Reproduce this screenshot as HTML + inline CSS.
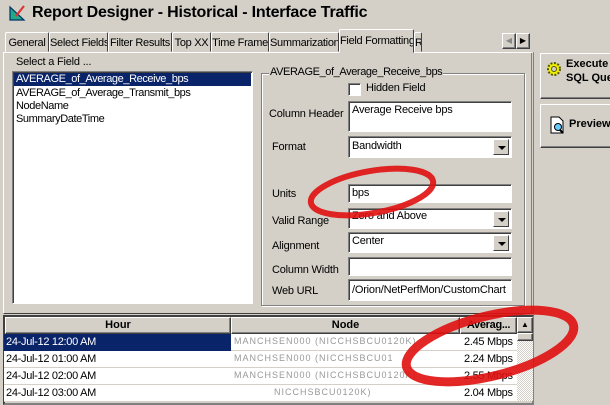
<!DOCTYPE html>
<html><head><meta charset="utf-8"><style>
*{box-sizing:border-box}
body{margin:0;width:610px;height:400px;overflow:hidden;background:#d4d0c8;font-family:"Liberation Sans",sans-serif;font-size:11px;color:#000;position:relative}
.a{position:absolute}
.sunk{background:#fff;border:1px solid;border-color:#808080 #fff #fff #808080;box-shadow:inset 1px 1px 0 #404040}
.rais{border:1px solid;border-color:#fff #404040 #404040 #fff;box-shadow:inset -1px -1px 0 #808080}
.tab{position:absolute;top:32px;height:20px;border:1px solid;border-color:#fff #404040 transparent #fff;border-radius:2px 2px 0 0;padding-top:4px;text-align:center;font-size:11px;letter-spacing:-0.3px;white-space:nowrap;overflow:hidden}
.lbl{position:absolute;font-size:11px;letter-spacing:-0.2px;white-space:nowrap}
.inp{position:absolute;left:348px;width:164px;font-size:11px;letter-spacing:-0.2px;padding:2px 3px;white-space:nowrap;overflow:hidden}
.dd{position:absolute;right:2px;top:2px;width:16px;height:16px;background:#d4d0c8;border:1px solid;border-color:#fff #404040 #404040 #fff}
.dd:after{content:"";position:absolute;left:4px;top:6px;border:4px solid transparent;border-top:4px solid #000;border-bottom:0}
.row{position:absolute;left:4px;width:513px;height:17px;background:#fff;border-bottom:1px solid #d4d0c8;font-size:11px;letter-spacing:-0.3px}
.row span{position:absolute;top:2px;white-space:nowrap}
</style></head><body>
<svg class="a" style="left:8px;top:4px" width="18" height="18"><path d="M2 3v13h14z" fill="#2a8" stroke="#036" stroke-width="1.2"/><path d="M8 12l8-10" stroke="#d33" stroke-width="2.2"/></svg>
<div class="a" style="left:32px;top:4px;font-size:16px;font-weight:bold;letter-spacing:-0.2px">Report Designer - Historical - Interface Traffic</div>

<div class="tab" style="left:5px;width:44px">General</div>
<div class="tab" style="left:49px;width:59px">Select Fields</div>
<div class="tab" style="left:108px;width:64px">Filter Results</div>
<div class="tab" style="left:172px;width:39px">Top XX</div>
<div class="tab" style="left:211px;width:58px">Time Frame</div>
<div class="tab" style="left:269px;width:70px">Summarization</div>
<div class="tab" style="left:339px;width:75px;top:29px;height:24px;background:#d4d0c8;z-index:2;padding-top:5px">Field Formatting</div>
<div class="tab" style="left:414px;width:8px">R</div>
<div class="a rais" style="left:502px;top:33px;width:14px;height:16px;background:#d4d0c8;color:#888;font-size:8px;text-align:center;line-height:14px">◀</div>
<div class="a rais" style="left:516px;top:33px;width:14px;height:16px;background:#d4d0c8;font-size:8px;text-align:center;line-height:14px">▶</div>

<div class="a" style="left:3px;top:52px;width:531px;height:262px;border:1px solid;border-color:#fff #404040 #404040 #fff;border-right:3px double #808080"></div>
<div class="lbl" style="left:16px;top:56px">Select a Field ...</div>
<div class="a sunk" style="left:12px;top:71px;width:241px;height:233px;font-size:11px;letter-spacing:-0.4px">
<div style="background:#0a246a;color:#fff;margin:1px;padding:0 2px;height:13px;line-height:13px">AVERAGE_of_Average_Receive_bps</div>
<div style="padding:0 3px;line-height:13px">AVERAGE_of_Average_Transmit_bps<br>NodeName<br>SummaryDateTime</div></div>

<div class="a" style="left:261px;top:73px;width:264px;height:233px;border:1px solid #808080;box-shadow:1px 1px 0 #fff,inset 1px 1px 0 #fff"></div>
<div class="lbl" style="left:269px;top:66px;background:#d4d0c8;padding:0 1px;letter-spacing:-0.4px">AVERAGE_of_Average_Receive_bps</div>
<div class="a sunk" style="left:348px;top:83px;width:13px;height:13px"></div>
<div class="lbl" style="left:366px;top:82px">Hidden Field</div>
<div class="lbl" style="left:269px;top:108px">Column Header</div>
<div class="inp sunk" style="top:101px;height:31px">Average Receive bps</div>
<div class="lbl" style="left:272px;top:141px">Format</div>
<div class="inp sunk" style="top:136px;height:22px;padding-top:3px">Bandwidth<div class="dd"></div></div>
<div class="lbl" style="left:272px;top:188px">Units</div>
<div class="inp sunk" style="top:184px;height:19px">bps</div>
<div class="lbl" style="left:272px;top:215px">Valid Range</div>
<div class="inp sunk" style="top:208px;height:21px;padding-top:1px">Zero and Above<div class="dd"></div></div>
<div class="lbl" style="left:272px;top:240px">Alignment</div>
<div class="inp sunk" style="top:232px;height:21px">Center<div class="dd"></div></div>
<div class="lbl" style="left:272px;top:264px">Column Width</div>
<div class="inp sunk" style="top:257px;height:19px"></div>
<div class="lbl" style="left:272px;top:285px">Web URL</div>
<div class="inp sunk" style="top:279px;height:22px;padding-top:4px">/Orion/NetPerfMon/CustomChart</div>

<div class="a rais" style="left:540px;top:53px;width:75px;height:46px;background:#d4d0c8"></div>
<svg class="a" style="left:546px;top:61px" width="16" height="16"><circle cx="8" cy="8" r="6" fill="#ee0" stroke="#550" stroke-width="2" stroke-dasharray="2 1.5"/><circle cx="8" cy="8" r="2.5" fill="#d4d0c8" stroke="#550"/></svg>
<div class="a" style="left:566px;top:57px;font-weight:bold;font-size:11px;line-height:14px;white-space:nowrap">Execute<br>SQL Que</div>
<div class="a rais" style="left:540px;top:104px;width:75px;height:44px;background:#d4d0c8"></div>
<svg class="a" style="left:549px;top:116px" width="16" height="18"><path d="M2 1h8l4 4v12H2z" fill="#fff" stroke="#000"/><circle cx="9" cy="11" r="3.5" fill="#6cf" stroke="#000"/><path d="M11 14l3 3" stroke="#000" stroke-width="2"/></svg>
<div class="a" style="left:569px;top:118px;font-weight:bold;font-size:11px;white-space:nowrap">Preview</div>

<div class="a" style="left:3px;top:315px;width:531px;height:90px;border:2px solid;border-color:#404040 #808080 #808080 #404040;background:#d4d0c8"></div>
<div class="a rais" style="left:5px;top:317px;width:226px;height:17px;background:#d4d0c8;text-align:center;font-weight:bold;font-size:11px;line-height:15px">Hour</div>
<div class="a rais" style="left:231px;top:317px;width:229px;height:17px;background:#d4d0c8;text-align:center;font-weight:bold;font-size:11px;line-height:15px">Node</div>
<div class="a rais" style="left:460px;top:317px;width:57px;height:17px;background:#d4d0c8;text-align:center;font-weight:bold;font-size:11px;line-height:15px;overflow:hidden;white-space:nowrap;letter-spacing:-0.3px">Averag...</div>
<div class="a rais" style="left:517px;top:317px;width:16px;height:16px;background:#d4d0c8;font-size:8px;text-align:center;line-height:14px">▲</div>
<div class="a rais" style="left:517px;top:333px;width:16px;height:8px;background:#d4d0c8"></div>
<div class="a" style="left:517px;top:341px;width:16px;height:60px;background:repeating-conic-gradient(#fff 0 25%,#d4d0c8 0 50%) 0 0/2px 2px"></div>
<div class="row" style="top:334px"><div class="a" style="left:0;top:0;width:227px;height:17px;background:#0a246a"></div><span style="left:2px;color:#fff">24-Jul-12 12:00 AM</span><span style="left:230px;color:#999;font-size:9px;letter-spacing:1px">MANCHSEN000 (NICCHSBCU0120K)</span><span style="left:460px">2.45 Mbps</span></div>
<div class="row" style="top:351px"><span style="left:2px">24-Jul-12 01:00 AM</span><span style="left:230px;color:#999;font-size:9px;letter-spacing:1px">MANCHSEN000 (NICCHSBCU01</span><span style="left:460px">2.24 Mbps</span></div>
<div class="row" style="top:368px"><span style="left:2px">24-Jul-12 02:00 AM</span><span style="left:230px;color:#999;font-size:9px;letter-spacing:1px">MANCHSEN000 (NICCHSBCU0120K)</span><span style="left:460px">2.55 Mbps</span></div>
<div class="row" style="top:385px"><span style="left:2px">24-Jul-12 03:00 AM</span><span style="left:270px;color:#999;font-size:9px;letter-spacing:1px">NICCHSBCU0120K)</span><span style="left:460px">2.04 Mbps</span></div>

<svg class="a" style="left:0;top:0" width="610" height="400">
<ellipse cx="372" cy="192" rx="62" ry="21" transform="rotate(-10 372 192)" fill="none" stroke="#e01010" stroke-width="6" opacity=".9"/>
<ellipse cx="490" cy="346" rx="86" ry="30" transform="rotate(-14 490 346)" fill="none" stroke="#e01010" stroke-width="9" opacity=".9"/>
</svg>
</body></html>
